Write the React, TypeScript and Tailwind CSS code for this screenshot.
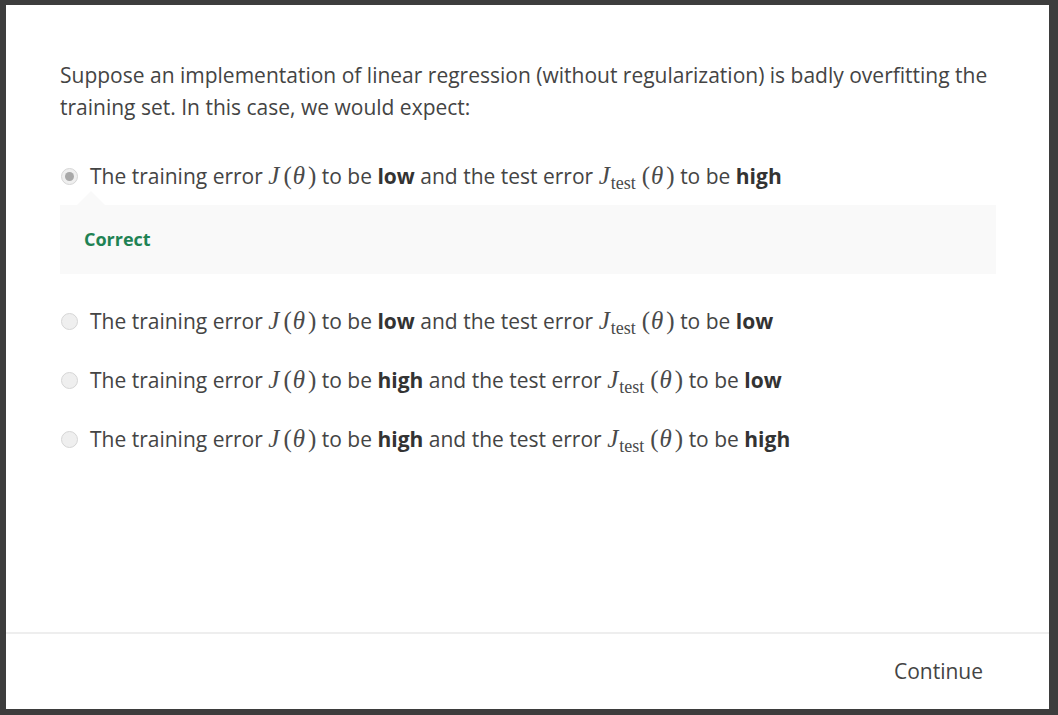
import React from 'react';

const font = { fontFamily: '"Open Sans", "Liberation Sans", sans-serif' };

const J: React.FC<{ sub?: boolean }> = ({ sub }) => (
  <span className="font-['Liberation_Serif',serif] text-[25px] text-[#4a4a4a] whitespace-nowrap leading-none">
    <i className="mr-[3px]">J</i>
    {sub && <span className="text-[18px] relative top-[5px] ml-[-2px] mr-[5px]">test</span>}
    <span className="mx-[1px]">(</span>
    <i className="mr-[3px]">θ</i>
    <span>)</span>
  </span>
);

const Radio: React.FC<{ checked?: boolean }> = ({ checked }) => (
  <span className="w-[17px] h-[17px] rounded-full border border-[#d6d6d6] bg-[#efefef] flex items-center justify-center shrink-0">
    {checked && <span className="w-[9px] h-[9px] rounded-full bg-[#a8a8a8]" />}
  </span>
);

const Option: React.FC<{ train: string; test: string; checked?: boolean }> = ({ train, test, checked }) => (
  <div className="flex items-center gap-[12px] h-[32px] ml-[1px]">
    <Radio checked={checked} />
    <span className="text-[21px] text-[#444] leading-[32px] whitespace-nowrap">
      The training error <J /> to be <b className="font-bold text-[#333]">{train}</b> and the test error <J sub /> to be{' '}
      <b className="font-bold text-[#333]">{test}</b>
    </span>
  </div>
);

export default function App() {
  return (
    <div className="w-[1058px] h-[715px] bg-[#3d3d3d] pt-[5px] pl-[6px] overflow-hidden" style={font}>
      <div className="w-[1043px] h-[704px] bg-white flex flex-col">
        <div className="flex-1 px-[54px] pt-[54px]">
          <p className="text-[21px] leading-[32px] text-[#444] whitespace-nowrap">
            Suppose an implementation of linear regression (without regularization) is badly overfitting the
            <br />
            training set. In this case, we would expect:
          </p>

          <div className="mt-[37px]">
            <Option train="low" test="high" checked />
          </div>

          <div className="relative mt-[13px] h-[69px] w-[936px] bg-[#f9f9f9] flex items-center px-[24px]">
            <span className="absolute left-[17px] top-[-14px] w-0 h-0 border-l-[14px] border-r-[14px] border-b-[14px] border-l-transparent border-r-transparent border-b-[#f9f9f9]" />
            <span className="text-[18px] font-bold text-[#1f8354]">Correct</span>
          </div>

          <div className="mt-[31px] flex flex-col gap-[27px]">
            <Option train="low" test="low" />
            <Option train="high" test="low" />
            <Option train="high" test="high" />
          </div>
        </div>

        <div className="h-[77px] border-t-2 border-[#eeeeee] flex items-center justify-end pr-[66px]">
          <button className="text-[21px] text-[#444]">Continue</button>
        </div>
      </div>
    </div>
  );
}
